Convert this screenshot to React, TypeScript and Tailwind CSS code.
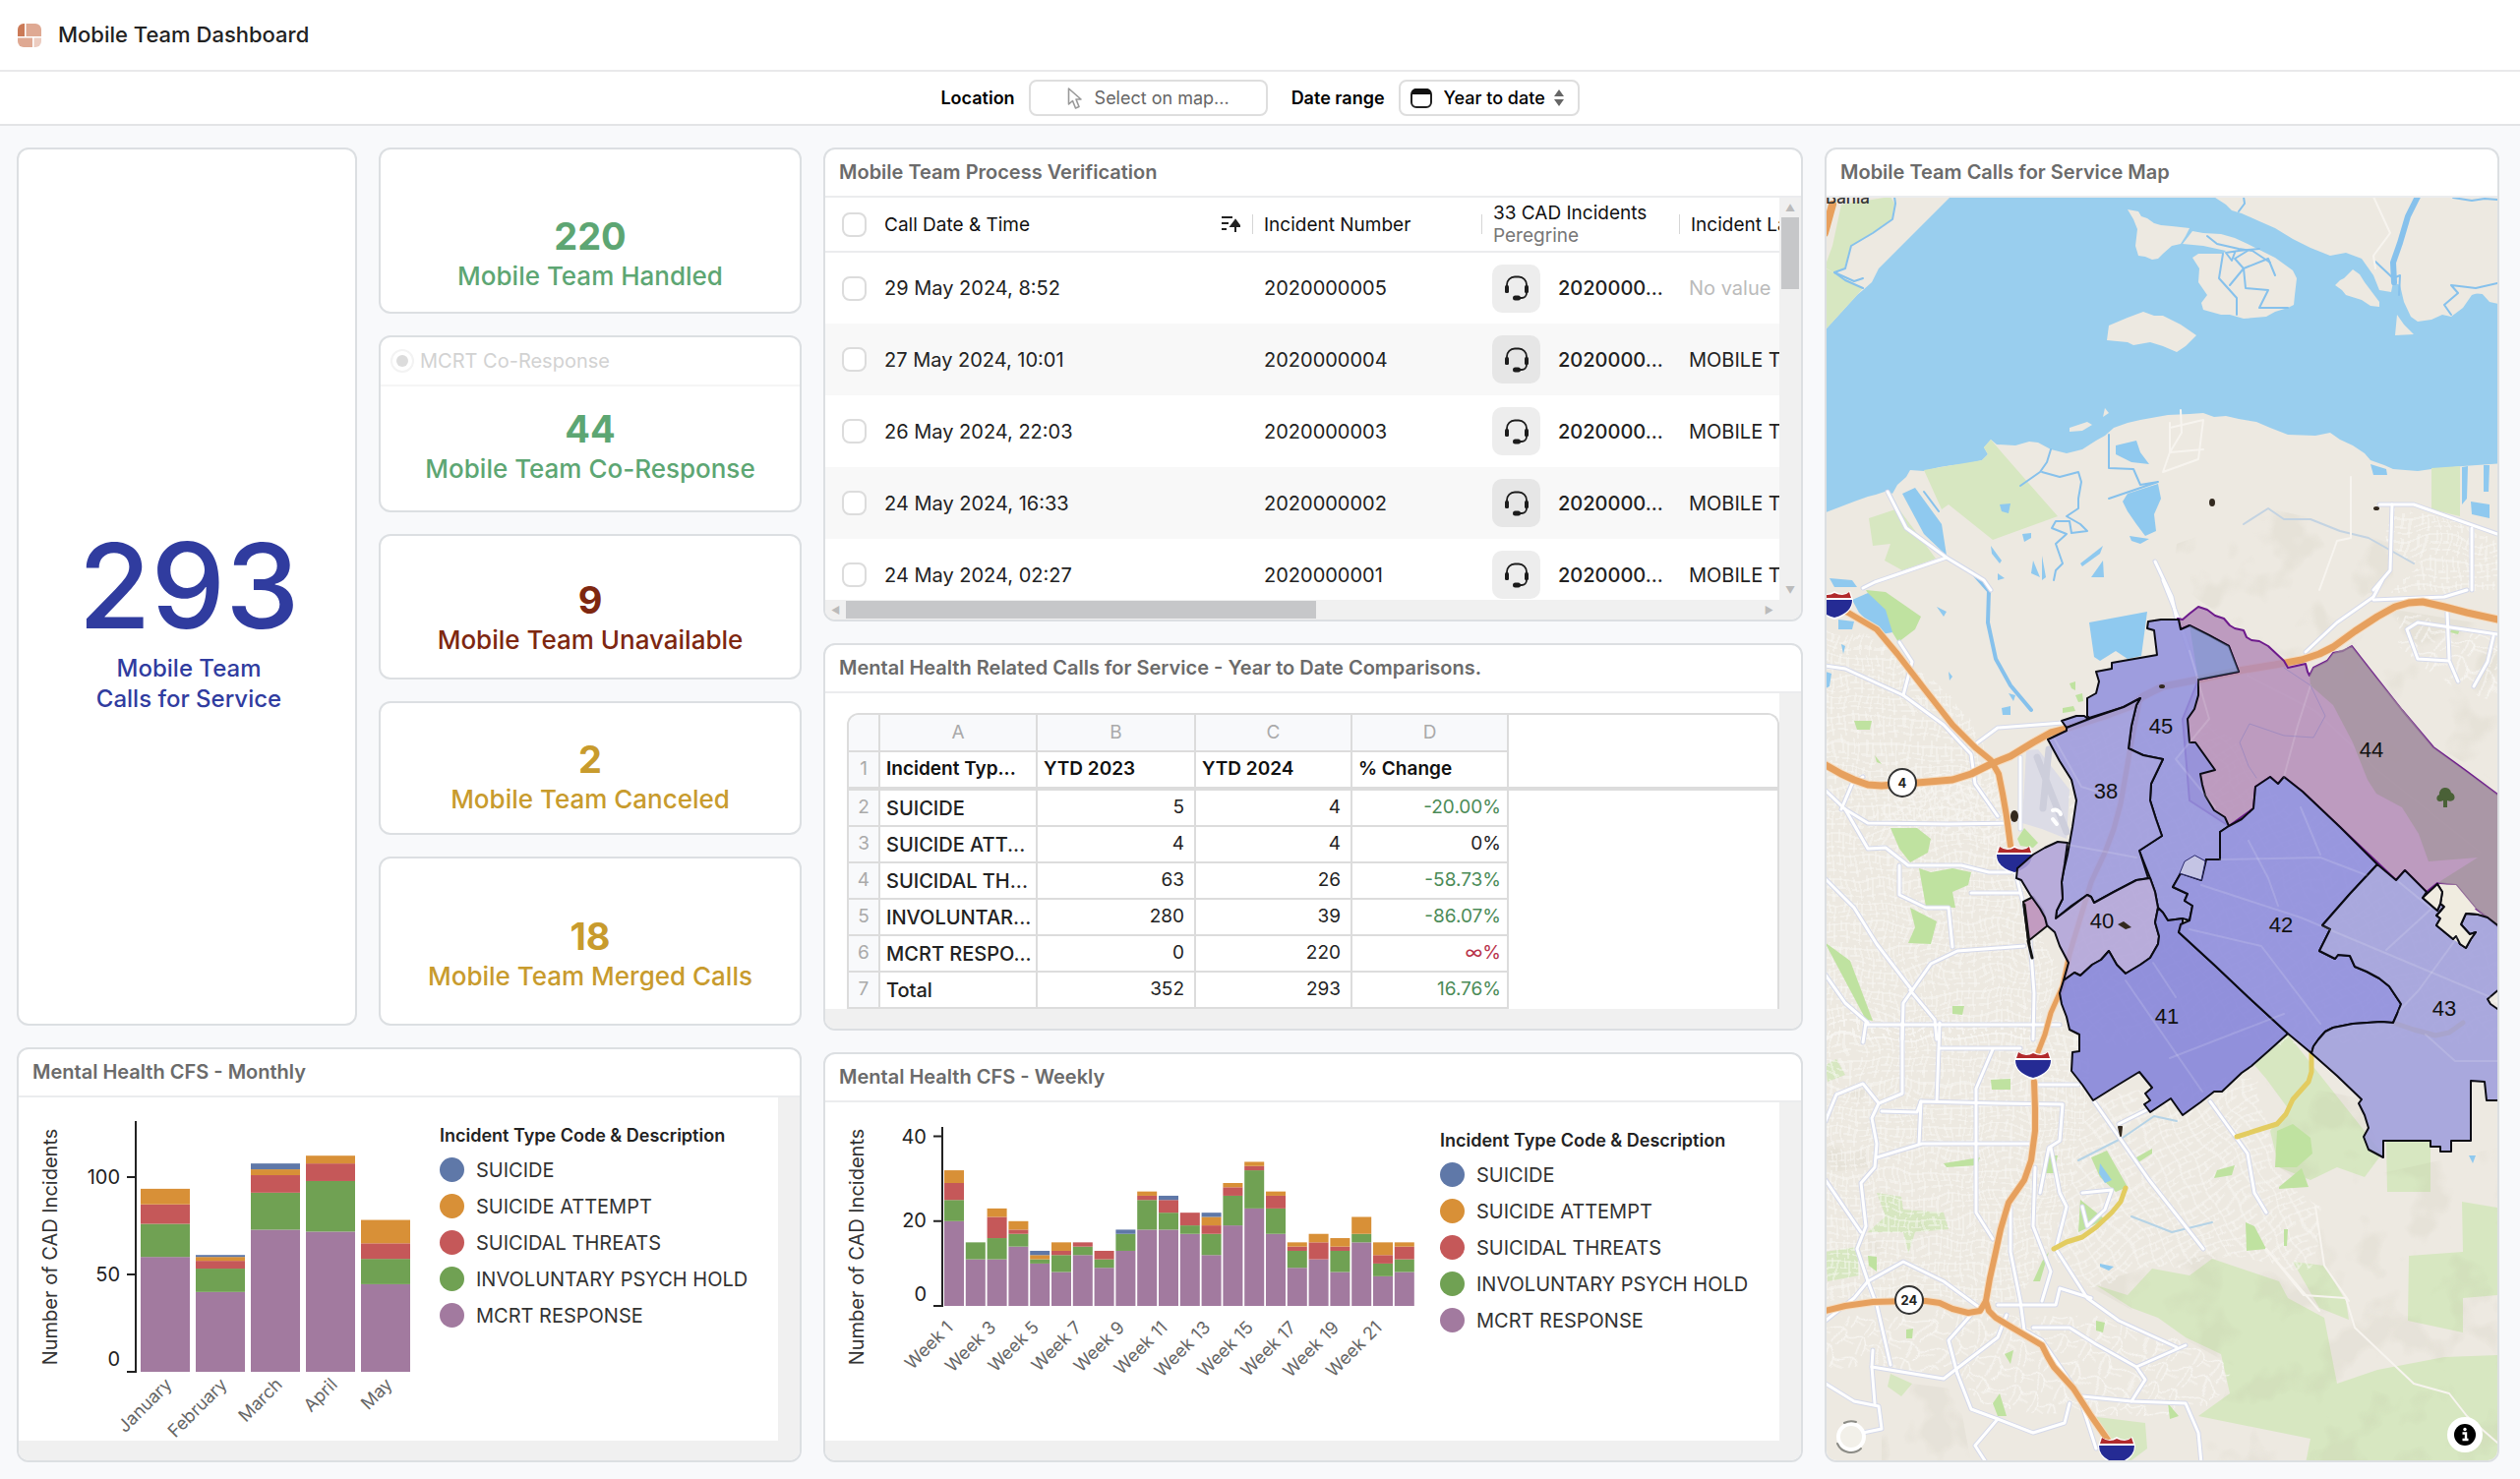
import type { ReactNode } from "react";
import clsx from "clsx";

// ---------- data ----------

const segmentColors = ["#a27a9f", "#70a153", "#c55859", "#d89037", "#5f78a8"];

// each bar is stacked bottom-up: MCRT, hold, threats, attempt, suicide
const monthly = [
  { label: "January", parts: [59, 17, 10, 8, 0] },
  { label: "February", parts: [41, 12, 4, 2, 1] },
  { label: "March", parts: [73, 19, 9, 3, 3] },
  { label: "April", parts: [72, 26, 9, 4, 0] },
  { label: "May", parts: [45, 13, 8, 12, 0] },
];

const weekly = [
  [20, 5, 4, 3, 0],
  [11, 4, 0, 0, 0],
  [11, 5, 5, 2, 0],
  [14, 3, 1, 2, 0],
  [10, 1, 0, 1, 1],
  [8, 4, 1, 2, 0],
  [12, 2, 1, 0, 0],
  [9, 2, 2, 0, 0],
  [13, 4, 0, 0, 1],
  [18, 7, 1, 1, 0],
  [18, 4, 3, 0, 1],
  [17, 2, 3, 0, 0],
  [12, 5, 2, 2, 1],
  [19, 7, 2, 1, 0],
  [23, 9, 1, 1, 0],
  [17, 6, 3, 1, 0],
  [9, 4, 1, 1, 0],
  [11, 0, 4, 2, 0],
  [8, 5, 1, 2, 0],
  [15, 2, 0, 4, 0],
  [7, 3, 2, 3, 0],
  [8, 3, 3, 1, 0],
].map((parts, i) => ({ label: i % 2 === 0 ? `Week ${i + 1}` : "", parts }));

const legend = [
  { name: "SUICIDE", dot: "bg-[#5f78a8]" },
  { name: "SUICIDE ATTEMPT", dot: "bg-[#d89037]" },
  { name: "SUICIDAL THREATS", dot: "bg-[#c55859]" },
  { name: "INVOLUNTARY PSYCH HOLD", dot: "bg-[#70a153]" },
  { name: "MCRT RESPONSE", dot: "bg-[#a27a9f]" },
];

const calls = [
  { date: "29 May 2024, 8:52", number: "2020000005", label: "" },
  { date: "27 May 2024, 10:01", number: "2020000004", label: "MOBILE TEAM" },
  { date: "26 May 2024, 22:03", number: "2020000003", label: "MOBILE TEAM" },
  { date: "24 May 2024, 16:33", number: "2020000002", label: "MOBILE TEAM" },
  { date: "24 May 2024, 02:27", number: "2020000001", label: "MOBILE TEAM" },
];

const comparison = [
  { type: "SUICIDE", y23: "5", y24: "4", change: "-20.00%", tone: "text-[#4b8b57]" },
  { type: "SUICIDE ATT...", y23: "4", y24: "4", change: "0%", tone: "text-[#222]" },
  { type: "SUICIDAL TH...", y23: "63", y24: "26", change: "-58.73%", tone: "text-[#4b8b57]" },
  { type: "INVOLUNTAR...", y23: "280", y24: "39", change: "-86.07%", tone: "text-[#4b8b57]" },
  { type: "MCRT RESPO...", y23: "0", y24: "220", change: "∞%", tone: "text-[#b8324a]" },
  { type: "Total", y23: "352", y24: "293", change: "16.76%", tone: "text-[#4b8b57]" },
];

// ---------- shared pieces ----------

function Panel({ title, children }: { title: string; children: ReactNode }) {
  return (
    <section className="flex min-h-0 flex-col overflow-hidden rounded-xl border-2 border-[#dcdfe2] bg-white">
      <h2 className="h-[49px] shrink-0 border-b-2 border-[#ebecee] px-[14px] text-[20px] leading-[47px] font-semibold text-[#6b6b6b]">
        {title}
      </h2>
      {children}
    </section>
  );
}

// content with the grey scroll gutters on the right and the bottom
function Gutters({ children }: { children: ReactNode }) {
  return (
    <div className="flex min-h-0 flex-1 bg-[#f0f0f0] pr-[22px] pb-5">
      <div className="flex min-w-0 flex-1 overflow-hidden bg-white">{children}</div>
    </div>
  );
}

function StatCard({ value, label, className, children }: { value: string; label: string; className: string; children?: ReactNode }) {
  return (
    <section className={clsx("flex min-h-0 flex-col rounded-xl border-2 border-[#dcdfe2] bg-white text-center", className)}>
      {children}
      <div className="mt-auto">
        <p className="text-[38px] leading-[46px] font-bold">{value}</p>
        <p className="text-[26px] leading-9 font-medium">{label}</p>
      </div>
    </section>
  );
}

function Legend() {
  return (
    <div className="whitespace-nowrap">
      <h3 className="text-[18px] leading-6 font-semibold text-[#222]">Incident Type Code &amp; Description</h3>
      <ul className="mt-1 text-[20px] text-[#333]">
        {legend.map((item) => (
          <li key={item.name} className="flex h-[37px] items-center gap-3">
            <span className={clsx("size-[25px] rounded-full", item.dot)} />
            {item.name}
          </li>
        ))}
      </ul>
    </div>
  );
}

type ChartProps = {
  bars: { label: string; parts: number[] }[];
  ticks: { value: number; labelY: number }[];
  width: number;
  height: number;
  axisX: number;
  top: number;
  base: number;
  unit: number;
  start: number;
  pitch: number;
  barWidth: number;
  labelShift: number;
  labelGap: number;
  tickX: number;
  titleY: number;
};

function StackedChart(p: ChartProps) {
  return (
    <svg width={p.width} height={p.height} className="shrink-0" role="img" aria-label="Number of CAD Incidents">
      <text
        transform={`translate(39 ${p.titleY}) rotate(-90)`}
        textAnchor="middle"
        className="fill-[#333] text-[20px]"
      >
        Number of CAD Incidents
      </text>
      <path d={`M${p.axisX} ${p.top}V${p.base}`} stroke="#222" strokeWidth="2" />
      {p.ticks.map((tick) => (
        <g key={tick.value}>
          <path d={`M${p.axisX - 9} ${p.base - tick.value * p.unit}h10`} stroke="#222" strokeWidth="2" />
          <text x={p.tickX} y={tick.labelY} textAnchor="end" className="fill-[#222] text-[20px]">
            {tick.value}
          </text>
        </g>
      ))}
      {p.bars.map((bar, i) => {
        const x = p.start + i * p.pitch;
        let y = p.base;
        return (
          <g key={i}>
            {bar.parts.map((part, k) => {
              y -= part * p.unit;
              return <rect key={k} x={x} y={y} width={p.barWidth} height={part * p.unit} fill={segmentColors[k]} />;
            })}
            <text
              transform={`translate(${x + p.labelShift} ${p.base + p.labelGap}) rotate(-45)`}
              textAnchor="end"
              className="fill-[#666] text-[18px]"
            >
              {bar.label}
            </text>
          </g>
        );
      })}
    </svg>
  );
}

// ---------- icons ----------

function Logo() {
  return (
    <svg width="24" height="24" viewBox="0 0 24 24" aria-hidden="true">
      <path d="M6 0h1v13H0V6a6 6 0 0 1 6-6Z" fill="#cb7a57" />
      <path d="M8.500 0H18a6 6 0 0 1 6 6v7H8.500Z" fill="#dfa993" />
      <path d="M0 14.500h15V24H6a6 6 0 0 1-6-6Z" fill="#dfa993" />
      <path d="M16.500 14.500H24V18a6 6 0 0 1-6 6h-1.500Z" fill="#ecccc0" />
    </svg>
  );
}

function PointerIcon() {
  return (
    <svg width="16" height="24" viewBox="0 0 16 24" fill="none" stroke="#999" strokeWidth="1.600" strokeLinejoin="round" aria-hidden="true">
      <path d="M1.500 2v16l4-3.500 3 7.500 3.500-1.500-3-7.500H14Z" />
    </svg>
  );
}

function SortIcon() {
  return (
    <svg width="20" height="18" viewBox="0 0 20 18" aria-hidden="true">
      <path d="M1 2h11M1 8h7M1 14h5" stroke="#222" strokeWidth="2" />
      <path d="M15 17V9M15 5l-4.500 6h9Z" fill="#222" stroke="#222" strokeWidth="2" />
    </svg>
  );
}

function HeadsetIcon() {
  return (
    <svg width="26" height="26" viewBox="0 0 26 26" fill="none" aria-hidden="true">
      <path d="M3 11V9.500a8 8 0 0 1 8-8h4a8 8 0 0 1 8 8V18a5 5 0 0 1-5 5h-3" stroke="#1c1c1c" strokeWidth="1.800" />
      <rect x="1" y="10" width="4" height="8" rx="1.500" fill="#1c1c1c" />
      <rect x="21" y="10" width="4" height="8" rx="1.500" fill="#1c1c1c" />
      <rect x="9" y="20.500" width="8" height="5" rx="2.500" fill="#1c1c1c" />
    </svg>
  );
}

// ---------- map ----------

// Every sheet of the survey has its own units; trace() brings points into map pixels.
type Sheet = { sx: number; sy: number; ox: number; oy: number };
const north: Sheet = { sx: 2.2, sy: 3, ox: -6, oy: -60 };
const middle: Sheet = { sx: 2.2, sy: 3, ox: -6, oy: 390 };
const south: Sheet = { sx: 2.2, sy: 3, ox: -6, oy: 840 };
const beat: Sheet = { sx: 3, sy: 2.9, ox: 184, oy: 400 };

function trace(sheet: Sheet, points: string) {
  return points
    .split(" ")
    .map((pair) => {
      const [u, v] = pair.split(",").map(Number);
      return `${Math.round(u / sheet.sx + sheet.ox)},${Math.round(v / sheet.sy + sheet.oy)}`;
    })
    .join(" ");
}

const bay = trace(
  north,
  "296,178 255,235 213,290 165,358 135,400 118,440 100,465 85,480 15,585 5,600 5,1148 50,1125 80,1110 110,1095 128,1088 155,1078 165,1085 175,1060 195,1035 205,1015 235,1018 270,1005 300,998 330,995 365,985 378,965 370,945 385,920 398,935 440,938 470,928 490,930 520,952 555,962 590,950 620,925 640,908 660,885 690,870 720,862 780,845 830,842 860,840 885,852 910,850 940,858 980,868 1010,885 1050,905 1110,910 1145,900 1165,920 1195,940 1220,962 1235,985 1265,1000 1285,1010 1340,1018 1370,1010 1440,1003 1530,992 1530,510 1500,500 1480,470 1460,480 1440,520 1415,545 1395,540 1370,555 1340,560 1325,545 1310,500 1300,450 1285,440 1280,470 1255,465 1240,420 1215,370 1180,352 1145,360 1100,335 1060,310 1020,275 985,255 945,230 925,222 910,205 880,178",
);

const islands = [
  "690,218 715,225 722,240 735,245 750,262 765,268 790,270 830,275 820,300 810,325 790,330 770,355 760,370 745,372 730,362 715,360 708,330 712,280 705,250",
  "835,285 860,290 900,295 930,305 960,325 990,345 1020,365 1060,405 1070,430 1065,480 1062,510 1050,520 1020,530 1000,545 950,552 920,540 900,540 860,525 855,505 868,480 850,440 852,400 835,365 850,355 905,355 910,345 860,330 815,325",
  "650,572 690,550 725,532 750,542 770,542 810,570 845,603 820,635 800,655 770,635 742,625 705,632 690,625 645,618",
  "1195,402 1210,418 1220,440 1255,500 1255,515 1235,512 1215,495 1180,480 1170,465 1155,450 1165,435 1175,430",
  "1293,540 1310,570 1332,600 1290,602",
  "560,885 600,868 612,875 590,895 560,898",
  "640,825 648,840 635,852",
  "1415,445 1519,455 1505,480 1440,470 1430,480",
].map((p) => trace(north, p));

const creeks = [
  trace(north, "170,181 172,200 165,250 120,290 72,330 60,400 35,412 60,435 98,460"),
  trace(north, "35,412 80,438 100,428"),
  trace(north, "950,181 952,200 940,225"),
  trace(north, "1420,183 1460,192 1490,185 1519,190"),
  trace(north, "1245,378 1285,430 1300,420 1298,480"),
  trace(north, "520,952 510,990 495,1020 450,1062"),
  trace(north, "500,1020 540,1035 580,1020 588,1050 580,1100 580,1130 555,1155 585,1180 600,1200 565,1205 560,1170 530,1170 522,1190 555,1210 530,1240 545,1300 530,1320 525,1350"),
  trace(north, "648,905 648,1008 705,1010 720,1060 760,1050 650,1102"),
  trace(north, "235,1080 268,1140"),
  trace(north, "1415,540 1400,510 1430,475 1415,450 1470,460 1519,445"),
  trace(north, "905,355 895,430 935,490 935,540"),
  trace(north, "870,300 890,325 940,340 970,345 1010,380"),
  trace(north, "960,345 930,370 950,400 1005,370 1020,420"),
  trace(north, "920,450 950,400 955,460 1005,465 985,520 1050,520"),
  trace(north, "930,350 925,375 910,350 940,345 985,340"),
];

const ponds = [
  trace(north, "188,1085 215,1068 275,1180 285,1275 235,1210"),
  trace(north, "665,940 710,925 720,960 740,995 700,990 665,965"),
  trace(north, "690,1085 760,1055 765,1100 750,1150 755,1200 730,1215 710,1180 690,1140 680,1110"),
  trace(north, "405,1120 430,1115 425,1145 410,1140"),
  trace(north, "385,1245 410,1290 405,1300 388,1270"),
  trace(north, "585,1300 635,1245 630,1270 590,1308"),
  trace(north, "610,1340 635,1290 638,1340"),
  trace(north, "455,1210 475,1205 475,1220 460,1232"),
  trace(north, "400,1330 415,1345 400,1350"),
  trace(north, "695,1215 740,1225 720,1238 700,1230"),
  trace(north, "25,1345 75,1350 85,1370 35,1372"),
  trace(north, "1235,995 1270,1010 1272,1030 1240,1030"),
  trace(north, "1438,1005 1452,1003 1450,1100 1438,1120"),
  trace(north, "1458,1110 1500,1120 1500,1160 1460,1150"),
  trace(north, "1488,1000 1500,1000 1498,1080 1488,1080"),
  trace(north, "475,1330 480,1290 495,1340"),
  trace(north, "500,1275 508,1340 500,1350"),
  trace(middle, "605,128 735,95 722,230 690,240 665,215 630,245 615,235"),
  trace(middle, "75,60 110,40 150,90 165,160 140,165 90,100"),
  trace(middle, "45,120 80,125 75,150 45,150"),
  trace(middle, "265,80 285,95 280,110"),
  trace(middle, "15,280 28,285 25,325 15,330"),
  trace(middle, "410,390 430,385 428,410 412,410"),
  trace(middle, "425,345 440,350 435,368"),
  trace(middle, "50,195 60,200 55,225"),
  trace(middle, "290,280 300,295 292,305"),
  trace(south, "630,430 655,480 640,490 628,460"),
  trace(south, "1455,405 1470,405 1462,430"),
  trace(south, "630,735 660,745 650,755 630,745"),
];

const meadows = [
  trace(north, "50,204 160,181 170,200 162,250 118,290 72,330 58,400 34,410 14,395 30,330"),
  trace(north, "15,400 98,460 85,480 15,585"),
  trace(north, "235,1015 300,998 365,985 378,965 370,945 385,920 410,960 535,1155 390,1228 290,1120 275,1135"),
  trace(north, "112,1160 178,1130 262,1285 188,1320 148,1290 160,1240 120,1245"),
  trace(north, "1370,1008 1435,1003 1435,1155 1370,1135"),
  trace(south, "1050,35 1260,400 1220,470 1160,440 1100,480 1030,440 1010,330 1050,260 1000,170 975,130"),
  trace(south, "1270,360 1368,360 1368,515 1272,515"),
  trace(south, "1320,710 1440,700 1438,545 1519,565 1519,830 1440,840 1440,945 1318,910"),
  trace(south, "620,800 690,830 745,750 830,770 880,720 1030,790 1050,840 1130,900 1160,1100 1250,1060 1400,1020 1519,1015 1519,1345 1090,1345 1100,1270 850,1200 920,1130 900,1010 820,960 760,900 700,870"),
  trace(south, "1060,730 1130,740 1180,850 1185,905 1120,870"),
  trace(south, "130,520 185,530 190,570 280,580 290,630 215,640 200,705 190,640 110,640 150,590"),
  trace(south, "15,700 85,685 90,770 20,790"),
  trace(south, "605,1200 730,1220 735,1300 690,1345 640,1260"),
  trace(south, "160,1070 210,1100 185,1140 155,1110"),
  trace(south, "15,130 40,110 60,160 20,180"),
];

const parks = [
  trace(middle, "105,30 150,35 228,110 215,150 178,190 160,150"),
  trace(middle, "160,755 220,755 250,790 245,830 205,860 180,820"),
  trace(middle, "225,880 250,890 300,880 340,890 335,930 300,950 305,1000 240,995"),
  trace(middle, "205,1000 265,1040 250,1110 200,1108 215,1060"),
  trace(middle, "14,1105 70,1160 120,1345 105,1340 50,1200"),
  trace(middle, "445,790 460,755 490,800 480,815 450,810"),
  trace(middle, "545,390 570,385 575,400 545,405"),
  trace(middle, "560,315 575,310 575,335 565,330"),
  trace(middle, "575,350 590,345 592,370 580,372"),
  trace(middle, "1415,150 1435,150 1430,165 1413,160"),
  trace(middle, "80,430 118,430 115,455 85,455"),
  trace(middle, "300,1300 325,1298 322,1325 300,1322"),
  trace(middle, "125,535 140,560 130,555"),
  trace(south, "1025,330 1060,310 1100,350 1105,400 1070,440 1020,440"),
  trace(south, "610,410 645,390 690,500 665,515 630,470"),
  trace(south, "585,540 640,600 580,640"),
  trace(south, "500,730 515,700 495,790 480,790"),
  trace(south, "1030,500 1080,445 1095,500 1030,508"),
  trace(south, "890,450 930,435 925,465 885,475"),
  trace(south, "710,410 745,385 745,400 715,425"),
  trace(south, "955,610 975,620 1000,690 958,695"),
  trace(south, "385,175 430,170 430,205 388,205"),
  trace(south, "280,430 360,410 355,435 285,440"),
  trace(south, "390,1160 405,1130 420,1200 400,1200"),
  trace(south, "780,1160 805,1200 785,1210"),
  trace(south, "620,910 640,915 635,945 620,940"),
  trace(south, "1040,630 1050,630 1048,680 1040,680"),
  trace(south, "110,710 130,715 130,760 112,740"),
  trace(south, "415,1010 435,1000 430,1040"),
  trace(south, "510,405 535,405 525,460 505,460"),
  trace(south, "195,935 212,932 210,962 195,962"),
];

// built-up areas, filled with a street lattice
const blocks = [
  { points: trace(middle, "14,150 150,190 330,400 400,600 430,820 480,980 520,1100 540,1220 500,1400 14,1400"), fill: "url(#streets-a)" },
  { points: trace(middle, "250,600 400,600 400,800 100,740"), fill: "url(#streets-b)" },
  { points: trace(south, "14,0 580,0 620,240 560,520 480,780 420,860 14,840"), fill: "url(#streets-a)" },
  { points: trace(south, "620,240 980,150 1000,260 1020,440 1120,560 1110,740 930,720 740,760 600,800 520,700"), fill: "url(#streets-b)" },
  { points: trace(south, "14,900 400,880 640,900 820,980 930,1060 870,1180 700,1200 560,1200 380,1180 280,1080 14,1040"), fill: "url(#streets-c)" },
  { points: trace(north, "1290,1130 1340,1150 1519,1210 1519,1380 1290,1380 1350,1300 1280,1230"), fill: "url(#streets-a)" },
  { points: trace(middle, "1290,120 1519,160 1519,350 1420,320 1300,200"), fill: "url(#streets-c)" },
  { points: trace(middle, "560,460 880,420 1000,620 1250,860 1519,1100 1519,1400 560,1400"), fill: "url(#streets-b)" },
];

const roads = [
  trace(north, "100,1375 125,1355 285,1280"),
  trace(north, "155,1080 195,1190 285,1280 370,1350 385,1380"),
  trace(north, "752,1292 790,1400 800,1470"),
  trace(north, "1255,1118 1330,1118 1519,1210"),
  trace(north, "1282,1118 1278,1320 1240,1380"),
  trace(north, "1460,1190 1460,1380"),
  trace(middle, "770,0 805,120 850,300"),
  trace(middle, "1240,60 1400,50 1450,30"),
  trace(middle, "1090,220 1160,130 1240,50 1260,0"),
  trace(middle, "1519,165 1340,130 1315,150 1340,240 1410,245 1430,310"),
  trace(middle, "1405,100 1410,240"),
  trace(middle, "1510,170 1495,250 1465,325"),
  trace(middle, "14,260 60,270 190,350 280,440 340,530 350,620 400,720"),
  trace(middle, "180,190 210,250 190,350"),
  trace(middle, "14,640 60,700 110,740 290,745 430,740"),
  trace(middle, "100,600 75,620 50,700"),
  trace(middle, "60,700 110,820 150,815 200,870 320,870 380,890 430,890"),
  trace(middle, "180,870 180,960 240,1000 290,1000 300,1120"),
  trace(middle, "14,910 80,1000 130,1110 210,1250"),
  trace(middle, "340,955 450,955"),
  trace(middle, "460,1115 310,1130 250,1170 190,1290 188,1400"),
  trace(middle, "440,890 470,1060 482,1260 480,1400"),
  trace(middle, "105,1355 540,1355"),
  trace(middle, "350,500 400,450 545,435"),
  trace(middle, "452,540 452,760"),
  trace(middle, "205,1250 260,1340 265,1400"),
  trace(middle, "14,1200 60,1290 110,1350"),
  trace(south, "188,0 188,215 135,245 118,290 130,370 125,440 95,490 105,620 85,690 110,790 130,860 160,1045"),
  trace(south, "15,480 95,640"),
  trace(south, "270,0 265,240"),
  trace(south, "270,78 450,78"),
  trace(south, "140,270 220,272 228,240 400,245 545,250 540,360 515,380 495,520"),
  trace(south, "228,240 225,370"),
  trace(south, "390,80 352,200 352,580 390,660"),
  trace(south, "130,410 230,370 480,370"),
  trace(south, "490,190 580,190"),
  trace(south, "615,240 740,480 860,690"),
  trace(south, "875,240 960,400 975,520 1000,580"),
  trace(south, "520,380 540,520 555,560 530,690 600,840 670,910 800,990"),
  trace(south, "430,560 430,700 450,850 460,940 500,970 580,1130 620,1300"),
  trace(south, "485,440 480,620 520,760 500,850"),
  trace(south, "15,300 40,220 100,185 135,245"),
  trace(south, "100,60 105,0"),
  trace(south, "110,790 190,730 280,790 360,870"),
  trace(south, "15,910 80,840 110,790"),
  trace(south, "400,860 530,860 540,810 610,840"),
  trace(south, "120,1000 118,1050 280,1085 400,960 420,890"),
  trace(south, "340,890 290,970 310,1070"),
  trace(south, "310,1070 340,1180 400,1210 480,1250 550,1220 560,1160"),
  trace(south, "480,930 560,930 620,980 710,1050 820,985"),
  trace(south, "590,1140 700,1155 820,1160 850,1250 855,1345"),
  trace(south, "710,1050 730,1090 700,1155"),
  trace(south, "15,1100 80,1155 135,1170 140,1240 100,1250"),
  trace(south, "118,1050 125,1160"),
  trace(south, "400,1210 350,1290 375,1340"),
  trace(south, "590,520 655,510 640,570 600,620 590,560"),
  trace(south, "670,310 760,250"),
];

const trails = [
  trace(north, "1240,181 1278,290 1240,360 1245,400"),
  trace(north, "1190,1035 1190,1220 1160,1230 1120,1380"),
  trace(north, "785,870 785,960 770,1020 850,980 860,860 785,885"),
  trace(north, "810,830 812,900 785,960 860,950"),
  trace(south, "1000,690 1085,830 1180,840 1200,930 1330,1100 1410,1130 1450,1200 1519,1280"),
  trace(south, "1000,690 1120,880"),
  trace(south, "1110,560 1130,740 1185,850"),
  trace(middle, "960,290 1110,400 1250,580 1480,830"),
];

// shaded relief
const hills = [
  trace(north, "800,1240 900,1190 1005,1130 1165,1180 1280,1240 1290,1390 790,1390"),
  trace(middle, "800,0 1260,0 1100,200 1060,250 850,60"),
  trace(middle, "1180,200 1290,90 1519,140 1519,620 1400,520"),
  trace(middle, "1100,270 1195,200 1380,510 1519,640 1519,1000 1450,900 1300,700"),
  trace(south, "600,800 750,740 900,700 1110,740 1120,500 1519,380 1519,1345 850,1345 930,1050"),
  trace(south, "15,200 110,190 110,440 15,460"),
  trace(south, "110,520 300,560 290,760 110,760"),
  trace(south, "140,1090 310,1120 340,1345 140,1345"),
  trace(south, "1000,170 1210,230 1260,400 1160,560 1030,440"),
];

const highways = [
  { points: trace(middle, "14,70 65,100 130,150 175,225 235,330 300,440 350,510 385,550 402,590 412,650 420,720 430,810"), width: 6 },
  { points: trace(middle, "5,555 50,590 80,608 110,624 140,628 220,618 300,608 340,592 385,560 430,536 480,495 520,465 545,455 640,415 700,385 725,355 770,325 850,303 940,275 1020,258 1080,242 1120,225 1150,205 1200,155 1250,112 1290,82 1320,68 1350,65 1400,80 1450,98 1530,122"), width: 7 },
  { points: trace(middle, "718,370 705,460 690,560 675,680 660,760 640,830 610,920 590,1010 560,1140 545,1240 520,1320 505,1385 490,1440"), width: 5 },
  { points: trace(south, "482,180 484,260 484,330 475,420 460,480 425,550 408,630 395,700 382,780 375,850 380,880 395,900 440,935 500,985 512,1020 525,1050 570,1115 610,1200 655,1290"), width: 6 },
  { points: trace(south, "5,882 60,865 120,852 200,848 240,850 270,855 300,872 335,884 360,878 374,850"), width: 6 },
];

const arterials = [
  trace(south, "1102,85 1103,150 1095,180 1060,235 1045,280 1025,308 990,325 935,348"),
  trace(south, "687,505 675,545 655,580 620,625 590,655 555,668 525,690"),
  trace(south, "1285,0 1330,20 1380,38 1410,30 1440,0"),
];

// patrol beats
const beat44 = trace(
  beat,
  "525,85 540,88 560,70 588,50 615,58 640,75 665,85 685,105 700,112 725,118 735,138 750,148 775,150 800,165 850,210 862,230 915,218 922,240 928,252 940,228 980,210 1000,185 1030,180 1055,165 1130,258 1210,355 1305,465 1400,532 1510,610 1510,1000 1470,965 1435,940 1375,870 1318,865 1285,890 1218,827 1190,855 905,595 850,552 832,572 808,550 763,580 755,645 682,695 560,620 540,380 588,263 712,240 680,165 562,105 535,115",
);
const beat44Hills = trace(
  beat,
  "928,252 940,228 980,210 1000,185 1055,165 1130,258 1305,465 1510,610 1510,1000 1435,940 1375,870 1318,865 1440,790 1290,800 1260,720 1210,640 1130,600 1105,560 1060,450 1000,340 930,280",
);

const beats = [
  {
    fill: "#9392dd",
    points: trace(beat, "528,88 535,115 562,105 620,133 680,165 712,240 588,263 588,310 575,350 555,380 560,450 580,450 638,530 593,542 600,575 608,605 635,650 670,670 682,695 655,712 655,795 613,795 598,855 535,835 510,875 555,895 545,915 570,930 560,975 540,970 495,975 480,950 465,938 455,890 440,850 408,768 478,725 460,675 440,620 445,570 480,500 420,488 375,467 385,400 398,340 412,320 360,345 255,378 250,370 248,320 275,305 285,270 275,240 325,232 325,215 462,190 452,120 432,112 435,92 475,86"),
  },
  { fill: "#9392dd", points: trace(beat, "172,385 215,370 240,372 255,382 187,405") },
  {
    fill: "#9c99dd",
    points: trace(beat, "412,320 360,345 255,380 187,405 185,415 130,440 165,505 200,560 215,620 205,700 190,780 178,830 172,860 174,910 155,945 152,968 200,932 250,898 262,905 270,922 330,890 400,855 435,850 408,768 478,725 460,675 440,620 445,570 480,500 420,488 375,467 385,400 398,340"),
  },
  {
    fill: "#b0a3d8",
    points: trace(beat, "188,745 160,742 120,760 85,780 35,820 32,850 48,855 75,900 105,940 120,965 125,988 150,1010 165,1050 192,1100 178,1150 210,1128 228,1138 265,1105 290,1090 315,1065 340,1105 365,1130 410,1105 440,1085 465,1045 468,1020 455,980 465,938 455,890 440,850 400,855 330,890 270,922 262,905 250,898 152,968 155,945 174,910 172,860 180,810"),
  },
  {
    fill: "#8483da",
    points: trace(beat, "465,938 480,950 495,975 540,970 540,980 527,1008 640,1108 750,1208 860,1308 800,1360 750,1405 720,1425 660,1478 635,1480 595,1510 540,1548 503,1500 440,1540 423,1518 440,1505 425,1485 447,1468 408,1420 340,1462 268,1505 235,1460 200,1418 205,1362 225,1360 225,1310 195,1295 185,1260 170,1220 165,1190 178,1150 210,1128 228,1138 265,1105 290,1090 315,1065 340,1105 365,1130 410,1105 440,1085 465,1045 468,1020 455,980"),
  },
  {
    fill: "#8c8bdd",
    points: trace(beat, "808,550 832,572 850,552 905,595 1020,700 1135,808 1050,895 965,990 990,1000 958,1065 980,1075 1005,1088 1015,1075 1050,1080 1065,1110 1100,1125 1140,1145 1170,1168 1205,1220 1195,1250 1183,1277 1145,1272 1060,1280 1000,1290 975,1303 955,1325 940,1345 932,1365 860,1308 750,1208 640,1108 527,1008 535,985 560,975 570,930 545,915 555,895 510,875 535,835 598,855 613,795 655,795 655,712 682,695 720,675 755,645 763,580"),
  },
  {
    fill: "#9f9edc",
    points: trace(beat, "1135,808 1190,855 1218,827 1285,890 1272,908 1318,945 1325,925 1338,935 1315,960 1325,970 1315,990 1365,1030 1375,1020 1385,1045 1403,1055 1420,1030 1435,1010 1415,1015 1388,985 1405,955 1440,958 1470,965 1510,995 1510,1175 1490,1188 1470,1205 1478,1220 1510,1240 1510,1505 1468,1505 1460,1450 1420,1448 1420,1623 1358,1623 1358,1655 1326,1655 1326,1642 1296,1642 1296,1623 1151,1623 1151,1674 1106,1650 1091,1612 1108,1587 1095,1549 1078,1515 1087,1502 1010,1434 932,1365 940,1345 955,1325 975,1303 1000,1290 1060,1280 1145,1272 1183,1277 1195,1250 1205,1220 1170,1168 1140,1145 1100,1125 1065,1110 1050,1080 1015,1075 1005,1088 980,1075 958,1065 990,1000 965,990 1050,895"),
  },
];

const beatStreets = [
  "560,180 620,380 520,500 640,640",
  "655,795 960,790 1100,840",
  "598,870 900,965 1480,1200",
  "740,740 800,850 830,930",
  "560,1000 780,1050 960,1280",
  "365,1150 600,1480",
  "450,1100 520,1200",
  "500,1380 850,1250",
  "1160,1060 1300,940 1200,860",
  "1200,1240 1260,1180 1380,1020",
  "900,640 960,780",
  "930,280 890,400 850,550",
  "190,750 400,790",
  "150,440 230,580 300,600",
  "1280,1310 1370,1390 1500,1390",
].map((p) => trace(beat, p));

const beatLabels = [
  { name: "45", x: 342, y: 539 },
  { name: "44", x: 556, y: 563 },
  { name: "38", x: 286, y: 605 },
  { name: "40", x: 282, y: 737 },
  { name: "42", x: 464, y: 741 },
  { name: "41", x: 348, y: 834 },
  { name: "43", x: 630, y: 826 },
];

function Interstate({ x, y }: { x: number; y: number }) {
  return (
    <g transform={`translate(${x - 19} ${y - 14})`}>
      <path d="M3 0Q7 3 11 3T19 0Q23 3 27 3T35 0L38 9Q38 23 19 29Q0 23 0 9Z" fill="#fff" />
      <path d="M4 1Q8 4 12 4T19 2Q23 4 27 4T34 1L36 7H2Z" fill="#b12a2c" />
      <path d="M1 9H37Q37 22 19 27Q1 22 1 9Z" fill="#252b94" />
    </g>
  );
}

function Route({ x, y, name }: { x: number; y: number; name: string }) {
  return (
    <g>
      <circle cx={x} cy={y} r="14" fill="#fff" stroke="#333" strokeWidth="2" />
      <text x={x} y={y + 5} textAnchor="middle" className="fill-[#222] text-[13px] font-bold">
        {name}
      </text>
    </g>
  );
}

function ServiceMap() {
  return (
    <div className="relative min-h-0 flex-1">
      <svg viewBox="2 1 682 1284" preserveAspectRatio="xMidYMid slice" className="h-full w-full" role="img" aria-label="Map of patrol beats" strokeLinejoin="round" strokeLinecap="round">
        <defs>
          <pattern id="streets-a" width="13" height="23" patternUnits="userSpaceOnUse">
            <path d="M0 4H13M0 12H8M3 18H13M5 0V12M10 4V23" stroke="#fbfaf8" strokeWidth="1" fill="none" />
          </pattern>
          <pattern id="streets-b" width="17" height="16" patternUnits="userSpaceOnUse" patternTransform="rotate(-30)">
            <path d="M0 4H17M5 0V16M5 11H17M12 4V11" stroke="#fbfaf8" strokeWidth="1" fill="none" />
          </pattern>
          <pattern id="streets-c" width="26" height="22" patternUnits="userSpaceOnUse" patternTransform="rotate(25)">
            <path d="M0 5Q8 0 12 7T26 5M6 3V22M12 7Q16 12 12 22M13 14H26" stroke="#fbfaf8" strokeWidth="1.200" fill="none" />
          </pattern>
          {/* bends the lattice so that streets do not run dead straight */}
          <filter id="bend" x="0" y="0" width="100%" height="100%">
            <feTurbulence type="fractalNoise" baseFrequency="0.02" numOctaves="2" seed="4" />
            <feDisplacementMap in="SourceGraphic" scale="26" xChannelSelector="R" yChannelSelector="G" />
          </filter>
          <filter id="relief" x="0" y="0" width="100%" height="100%">
            <feTurbulence type="fractalNoise" baseFrequency="0.022" numOctaves="3" seed="9" />
            <feColorMatrix values="0 0 0 0 0.42  0 0 0 0 0.4  0 0 0 0 0.28  6 0 0 0 -3.1" />
            <feComposite in2="SourceGraphic" operator="in" />
          </filter>
        </defs>
        <rect width="700" height="1300" fill="#ede9e1" />
        <polygon points={bay} fill="#99ceee" />
        {islands.map((p) => (
          <polygon key={p} points={p} fill="#ede9e1" />
        ))}
        {meadows.map((p) => (
          <polygon key={p} points={p} fill="#d7e7c1" />
        ))}
        <g filter="url(#relief)" opacity="0.1">
          {hills.map((p) => (
            <polygon key={p} points={p} />
          ))}
        </g>
        <polygon points={trace(middle, "465,520 490,515 560,640 555,790 500,760 455,740")} fill="#dcdce6" />
        <path d="M216 570l30 76M228 562l-6 60" stroke="#cdcedb" strokeWidth="7" />
        <g filter="url(#bend)" opacity="0.8">
          {blocks.map((b) => (
            <polygon key={b.points} points={b.points} fill={b.fill} />
          ))}
        </g>
        {parks.map((p) => (
          <polygon key={p} points={p} fill="#bfe2a0" />
        ))}
        <g fill="none" stroke="#86c1ec" strokeWidth="2">
          {creeks.map((p) => (
            <polyline key={p} points={p} />
          ))}
          <polyline points={trace(north, "1340,181 1318,240 1300,320 1285,380 1288,440")} strokeWidth="6" />
          <polyline points={trace(north, "155,1078 195,1190 285,1280 345,1330 378,1380")} strokeWidth="4" />
          <polyline points={trace(middle, "365,0 380,30 378,130 395,240 430,320 475,395")} strokeWidth="4" />
          <polyline points={trace(south, "580,420 680,350 750,285 800,300")} stroke="#b5d3e6" />
          <polyline points={trace(south, "700,590 790,640 880,610")} stroke="#b5d3e6" />
          <polyline points={trace(north, "950,1180 1005,1132 1040,1165 1100,1165 1165,1200 1230,1220 1330,1300")} stroke="#c3d3e2" />
        </g>
        {ponds.map((p) => (
          <polygon key={p} points={p} fill="#8fc9ef" />
        ))}
        <g fill="none" stroke="#f7f4ef" strokeWidth="2">
          {trails.map((p) => (
            <polyline key={p} points={p} />
          ))}
        </g>
        <g fill="none" stroke="#d5d9ea" strokeWidth="5">
          {roads.map((p) => (
            <polyline key={p} points={p} />
          ))}
        </g>
        <g fill="none" stroke="#fff" strokeWidth="3">
          {roads.map((p) => (
            <polyline key={p} points={p} />
          ))}
        </g>
        <g fill="none" stroke="#e3cc60" strokeWidth="5">
          {arterials.map((p) => (
            <polyline key={p} points={p} />
          ))}
        </g>
        <polyline points={trace(north, "30,205 14,290")} stroke="#e8a05d" strokeWidth="8" />
        {highways.map((h) => (
          <polyline key={h.points} points={h.points} fill="none" stroke="#f6dcc0" strokeWidth={h.width + 2} />
        ))}
        {highways.map((h) => (
          <polyline key={h.points} points={h.points} fill="none" stroke="#e6a05e" strokeWidth={h.width} />
        ))}
        <Interstate x={10} y={415} />
        <Interstate x={193} y={674} />

        <polygon points={beat44} fill="#b48db9" fillOpacity="0.85" stroke="#6d1a8c" strokeWidth="2" />
        <polygon points={beat44Hills} fill="#a3959b" fillOpacity="0.7" />
        <polygon points={trace(beat, "55,918 85,905 115,945 128,990 70,1035")} fill="#c29bc0" stroke="#111" strokeWidth="2" />
        <path d="M207 757l4 17M203 720l5 40" stroke="#111" strokeWidth="3" />
        {beats.map((b) => (
          <polygon key={b.points} points={b.points} fill={b.fill} fillOpacity="0.88" stroke="#0b0b14" strokeWidth="2" />
        ))}
        <polygon points={trace(beat, "562,105 680,165 712,240 588,263")} fill="#7f96c4" fillOpacity="0.5" />
        <polygon points={trace(beat, "575,782 545,800 530,835 598,855 610,800")} fill="#c4c4e4" stroke="#2b2a6e" strokeWidth="1" />
        <polygon points={trace(beat, "1318,868 1375,870 1435,940 1405,955 1388,985 1415,1015 1435,1010 1403,1055 1365,1030 1315,990 1338,935")} fill="#f0ece0" />
        <polyline points={trace(beat, "1318,868 1332,890 1325,925 1338,935 1315,960 1325,970 1315,990 1365,1030 1375,1020 1385,1045 1403,1055 1420,1030 1435,1010 1415,1015 1388,985 1405,955 1440,958")} fill="none" stroke="#0b0b14" strokeWidth="2" />
        <polygon points={trace(beat, "1318,868 1272,908 1318,945 1325,925 1332,890")} fill="#f0ece0" stroke="#0b0b14" strokeWidth="2" />
        <g fill="none" stroke="#fff" strokeOpacity="0.14" strokeWidth="2">
          {beatStreets.map((p) => (
            <polyline key={p} points={p} />
          ))}
        </g>
        <polyline points={trace(beat, "850,230 930,280 975,370 940,435 850,430 745,393 713,450 740,520 765,555")} fill="none" stroke="#8f82c0" strokeOpacity="0.6" />

        <Interstate x={212} y={883} />
        <Interstate x={297} y={1275} />
        <Route x={79} y={596} name="4" />
        <Route x={86} y={1122} name="24" />
        <g fill="#33291f">
          <ellipse cx="394" cy="311" rx="3" ry="4" />
          <ellipse cx="561" cy="317" rx="3" ry="2" />
          <ellipse cx="193" cy="630" rx="4" ry="6" />
          <ellipse cx="343" cy="498" rx="3" ry="2" />
          <path d="M298 740l6-3 8 6-6 2Z" />
          <path d="M299 946l2 9 1-9Z" stroke="#33291f" strokeWidth="2" />
        </g>
        <path d="M232 624a6 6 0 0 1 8 4M236 638l-4-5" stroke="#fff" strokeWidth="4" fill="none" />
        <g fill="#4a6137">
          <path d="M623 614a4 4 0 0 1 2-6a6 6 0 0 1 12-2a5 5 0 0 1 3 7q-3 3-7 1v7h-4v-7q-4 2-6 0Z" />
        </g>
        <g textAnchor="middle" className="fill-[#111] font-['Liberation_Sans',sans-serif] text-[22px]">
          {beatLabels.map((label) => (
            <text key={label.name} x={label.x} y={label.y + 7}>
              {label.name}
            </text>
          ))}
        </g>
        <text x="1" y="7" className="fill-[#333] text-[17px] font-medium">
          Bahia
        </text>
        <circle cx="27" cy="1261" r="13" fill="#f4f2ed" fillOpacity="0.7" stroke="#fff" strokeWidth="4" />
        <path d="M20 1247a15 15 0 0 1 12-1M13 1268a15 15 0 0 0 24 5" stroke="#8c8c86" strokeWidth="2" fill="none" />
      </svg>
      <button type="button" aria-label="Map information" className="absolute right-[15px] bottom-2 flex size-9 items-center justify-center rounded-full bg-white">
        <svg width="22" height="22" viewBox="0 0 22 22" aria-hidden="true">
          <circle cx="11" cy="11" r="11" />
          <path d="M8.500 9.500H12V16M8.500 16h6" stroke="#fff" strokeWidth="2.400" fill="none" />
          <circle cx="11" cy="5.500" r="1.700" fill="#fff" />
        </svg>
      </button>
    </div>
  );
}

// ---------- tables ----------

const checkbox = "block size-[25px] appearance-none rounded-lg border-2 border-[#dcdcdc] bg-white";
const headCell = "relative pl-3 font-normal before:absolute before:left-0 before:top-1/2 before:h-5 before:w-px before:-translate-y-1/2 before:bg-[#d6d6d6]";

function CallsTable() {
  return (
    <div className="flex min-h-0 flex-1 flex-col bg-[#f0f0f0]">
      <div className="flex min-h-0 flex-1">
        <div className="min-w-0 flex-1 overflow-hidden bg-white">
          <table className="w-full table-fixed border-collapse text-left whitespace-nowrap text-[#222]">
            <colgroup>
              <col className="w-12" />
              <col className="w-[386px]" />
              <col className="w-[233px]" />
              <col className="w-[201px]" />
              <col />
            </colgroup>
            <thead className="text-[19px] leading-[23px] text-[#111]">
              <tr className="h-[55px] border-b-2 border-[#ebecee]">
                <th className="pl-[17px]">
                  <input type="checkbox" aria-label="Select all calls" className={checkbox} />
                </th>
                <th className="pr-3 pl-3 font-normal">
                  <div className="flex items-center justify-between">
                    Call Date &amp; Time
                    <SortIcon />
                  </div>
                </th>
                <th className={headCell}>Incident Number</th>
                <th className={headCell}>
                  33 CAD Incidents
                  <div className="text-[#777]">Peregrine</div>
                </th>
                <th className={clsx("overflow-hidden", headCell)}>Incident Label</th>
              </tr>
            </thead>
            <tbody className="text-[20px]">
              {calls.map((call) => (
                <tr key={call.number} className="h-[73px] even:bg-[#f8f8f8]">
                  <td className="pl-[17px]">
                    <input type="checkbox" aria-label={`Select ${call.number}`} className={checkbox} />
                  </td>
                  <td className="pl-3">{call.date}</td>
                  <td className="pl-3">{call.number}</td>
                  <td className="pl-[11px]">
                    <div className="flex items-center gap-[18px] font-medium">
                      <span className="flex size-[49px] items-center justify-center rounded-[10px] bg-black/7">
                        <HeadsetIcon />
                      </span>
                      2020000...
                    </div>
                  </td>
                  <td className="overflow-hidden pl-2.5">
                    {call.label || <span className="text-[#bbb]">No value</span>}
                  </td>
                </tr>
              ))}
            </tbody>
          </table>
        </div>
        <div className="flex w-[22px] shrink-0 flex-col items-center text-[10px] leading-5 text-[#bbb]" aria-hidden="true">
          ▲
          <div className="h-[73px] w-[18px] bg-[#c6c7c9]" />
          <span className="mt-auto">▼</span>
        </div>
      </div>
      <div className="mr-[22px] flex h-5 shrink-0 items-center px-1.5 text-[10px] text-[#bbb]" aria-hidden="true">
        ◀
        <div className="ml-1.5 h-[18px] w-[478px] bg-[#c6c7c9]" />
        <span className="ml-auto">▶</span>
      </div>
    </div>
  );
}

function ComparisonSheet() {
  const cell = "border-r-2 border-b-2 border-[#dcdcdc]";
  const headRow = "border-r-2 border-b-4 border-[#dcdcdc] pl-1.5";
  return (
    <div className="flex min-h-0 flex-1 bg-[#f0f0f0] pr-[22px] pb-5">
      <div className="min-w-0 flex-1 bg-white pt-5 pl-[22px]">
        <div className="h-full overflow-hidden rounded-t-xl border-2 border-b-0 border-[#dcdcdc]">
          <table className="w-full table-fixed border-separate border-spacing-0 text-left whitespace-nowrap text-[#222]">
            <colgroup>
              <col className="w-8" />
              <col className="w-40" />
              <col className="w-[161px]" />
              <col className="w-[159px]" />
              <col className="w-[159px]" />
              <col />
            </colgroup>
            <thead>
              <tr className="h-[38px] bg-[#f8f9fb] text-center text-[19px] text-[#aaa]">
                <td className={cell} />
                {["A", "B", "C", "D"].map((letter) => (
                  <th key={letter} scope="col" className={clsx(cell, "font-normal")}>
                    {letter}
                  </th>
                ))}
                <td className="bg-white" />
              </tr>
            </thead>
            <tbody className="text-[19px]">
              <tr className="h-[39px] font-semibold text-[#111]">
                <td className="border-r-2 border-b-4 border-[#dcdcdc] bg-[#f8f9fb] text-center font-normal text-[#aaa]">1</td>
                <td className={headRow}>Incident Typ...</td>
                <td className={headRow}>YTD 2023</td>
                <td className={headRow}>YTD 2024</td>
                <td className={headRow}>% Change</td>
                <td className="border-b-4 border-[#dcdcdc]" />
              </tr>
              {comparison.map((row, i) => (
                <tr key={row.type} className="h-[37px]">
                  <td className={clsx(cell, "bg-[#f8f9fb] text-center text-[#aaa]")}>{i + 2}</td>
                  <th scope="row" className={clsx(cell, "pl-1.5 text-[20px] leading-6 font-medium text-[#222]")}>
                    {row.type}
                  </th>
                  <td className={clsx(cell, "pr-2.5 text-right")}>{row.y23}</td>
                  <td className={clsx(cell, "pr-2.5 text-right")}>{row.y24}</td>
                  <td className={clsx(cell, "pr-1.5 text-right", row.tone)}>{row.change}</td>
                  <td />
                </tr>
              ))}
            </tbody>
          </table>
        </div>
      </div>
    </div>
  );
}

// ---------- page ----------

export default function App() {
  return (
    <div className="flex h-screen flex-col bg-[#f8f9fb] font-[Inter,sans-serif] text-[#222]">
      <header className="flex h-[73px] shrink-0 items-center gap-[17px] border-b-2 border-[#e9e9eb] bg-white px-[18px]">
        <Logo />
        <h1 className="text-[22px] font-medium">Mobile Team Dashboard</h1>
      </header>

      <form className="flex h-[55px] shrink-0 items-center justify-center border-b-2 border-[#e3e4e6] bg-white text-[18px] text-black">
        <span id="location" className="font-semibold">Location</span>
        <button type="button" aria-labelledby="location" className="ml-3.5 flex h-[37px] w-[243px] items-center justify-center gap-3 rounded-lg border-2 border-[#dedede] text-[#666]">
          <PointerIcon />
          Select on map...
        </button>
        <label htmlFor="range" className="ml-6 font-semibold">
          Date range
        </label>
        <div className="relative ml-3.5">
          <select id="range" className="h-[37px] w-[184px] appearance-none rounded-lg border-2 border-[#dedede] bg-white pl-11 font-medium">
            <option>Year to date</option>
          </select>
          <svg className="pointer-events-none absolute top-2 left-3" width="22" height="22" viewBox="0 0 22 22" aria-hidden="true">
            <rect x="1" y="2" width="20" height="18" rx="5" fill="none" stroke="#222" strokeWidth="2" />
            <path d="M1 7V6a5 5 0 0 1 5-5h10a5 5 0 0 1 5 5v1Z" fill="#111" />
          </svg>
          <svg className="pointer-events-none absolute top-2.5 right-4" width="10" height="17" viewBox="0 0 10 17" fill="#666" aria-hidden="true">
            <path d="M5 0l5 7H0ZM5 17l5-7H0Z" />
          </svg>
        </div>
      </form>

      <main className="grid min-h-0 flex-1 grid-cols-[798fr_996fr_686fr] gap-[22px] pt-[22px] pr-[21px] pb-[17px] pl-[17px]">
        <div className="grid min-h-0 grid-rows-[893fr_422fr] gap-[22px]">
          <div className="grid min-h-0 grid-cols-[346fr_430fr] gap-[22px]">
            <section className="flex flex-col items-center justify-center rounded-xl border-2 border-[#dcdfe2] bg-white pt-[60px] pl-1 text-[#303c9f]">
              <p className="text-[120px] leading-[136px] font-medium">293</p>
              <p className="text-center text-[24px] leading-[31px] font-medium">
                Mobile Team
                <br />
                Calls for Service
              </p>
            </section>
            <div className="grid min-h-0 grid-rows-[169fr_180fr_148fr_136fr_172fr] gap-[22px]">
              <StatCard value="220" label="Mobile Team Handled" className="pb-[18px] text-[#5da673]" />
              <StatCard value="44" label="Mobile Team Co-Response" className="pb-6 text-[#5da673]">
                <div className="flex h-[50px] items-center gap-1.5 border-b-2 border-[#f5f5f5] px-2.5 text-[20px] text-[#d2d2d2]">
                  <span className="flex size-6 items-center justify-center rounded-full border-2 border-[#f3f3f3]">
                    <span className="size-3 rounded-full bg-[#dcdcdc]" />
                  </span>
                  MCRT Co-Response
                </div>
              </StatCard>
              <StatCard value="9" label="Mobile Team Unavailable" className="pb-5 text-[#7e2710]" />
              <StatCard value="2" label="Mobile Team Canceled" className="pb-4 text-[#c89b2d]" />
              <StatCard value="18" label="Mobile Team Merged Calls" className="pb-[30px] text-[#c89b2d]" />
            </div>
          </div>

          <Panel title="Mental Health CFS - Monthly">
            <Gutters>
              <StackedChart
                bars={monthly}
                ticks={[
                  { value: 0, labelY: 273 },
                  { value: 50, labelY: 187 },
                  { value: 100, labelY: 88 },
                ]}
                width={428}
                height={350}
                axisX={119}
                top={24}
                base={279}
                unit={1.98}
                start={124}
                pitch={56}
                barWidth={50}
                labelShift={33}
                labelGap={14}
                tickX={103}
                titleY={152}
              />
              <div className="pt-[27px]">
                <Legend />
              </div>
            </Gutters>
          </Panel>
        </div>

        <div className="grid min-h-0 grid-rows-[482fr_394fr_417fr] gap-[22px]">
          <Panel title="Mobile Team Process Verification">
            <CallsTable />
          </Panel>
          <Panel title="Mental Health Related Calls for Service - Year to Date Comparisons.">
            <ComparisonSheet />
          </Panel>
          <Panel title="Mental Health CFS - Weekly">
            <Gutters>
              <StackedChart
                bars={weekly}
                ticks={[
                  { value: 0, labelY: 202 },
                  { value: 20, labelY: 127 },
                  { value: 40, labelY: 42 },
                ]}
                width={625}
                height={340}
                axisX={119}
                top={25}
                base={207}
                unit={4.31}
                start={121}
                pitch={21.8}
                barWidth={20}
                labelShift={10}
                labelGap={23}
                tickX={103}
                titleY={147}
              />
              <div className="pt-[27px]">
                <Legend />
              </div>
            </Gutters>
          </Panel>
        </div>

        <Panel title="Mobile Team Calls for Service Map">
          <ServiceMap />
        </Panel>
      </main>
    </div>
  );
}
